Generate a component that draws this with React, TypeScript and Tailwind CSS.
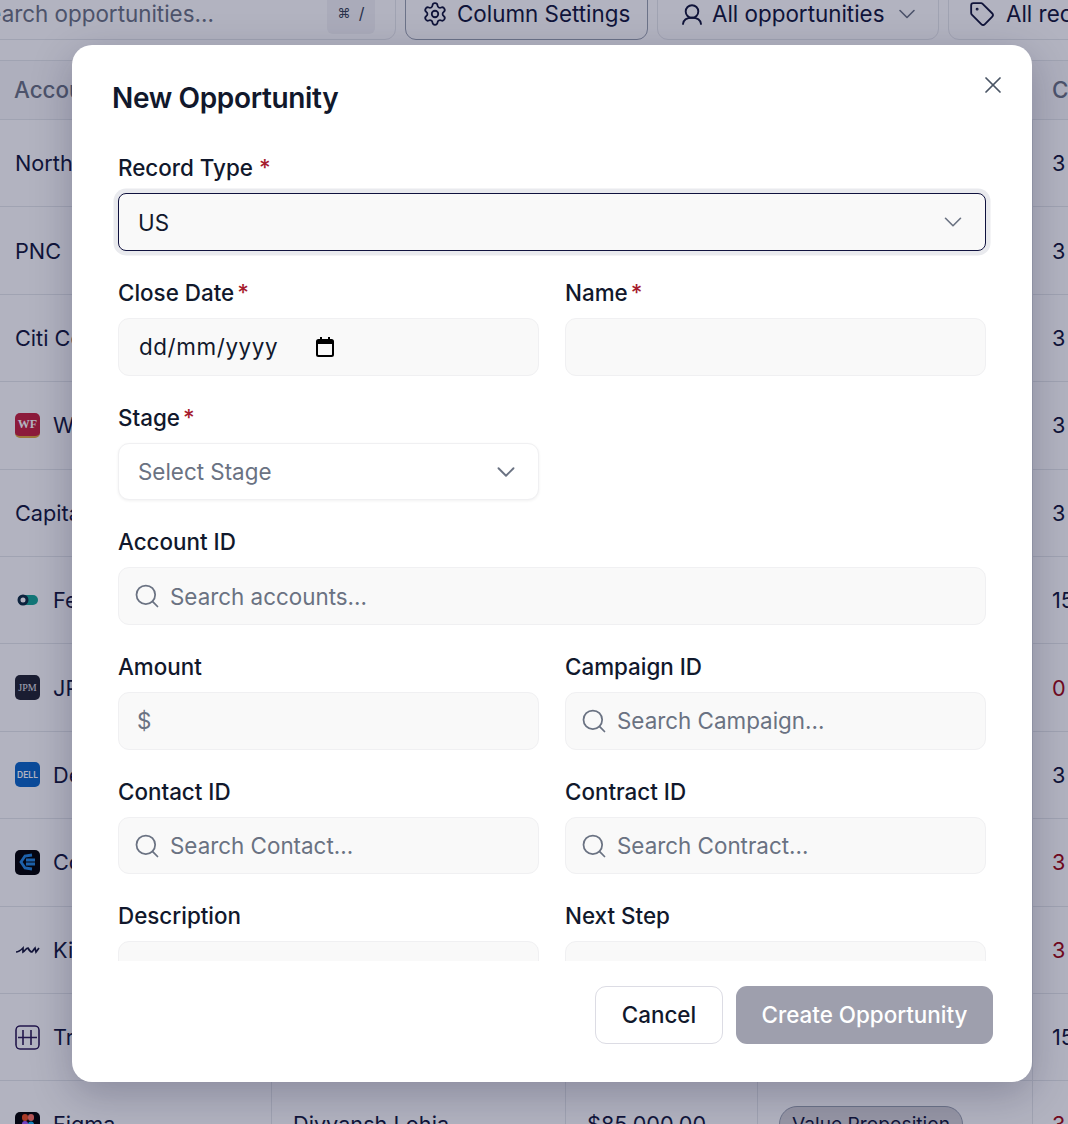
import React from 'react'
import { ChevronDown, Search, Settings, Tag, X } from 'lucide-react'

type RowData = {
  name: string
  logo?: React.ReactNode
  count: string
  late?: boolean
  owner?: string
  amount?: string
  stage?: string
}

const tile = 'w-[25px] h-[25px] rounded-[5px] flex items-center justify-center shrink-0 overflow-hidden'

const rows: RowData[] = [
  { name: 'Northern', count: '3' },
  { name: 'PNC', count: '3' },
  { name: 'Citi Corp', count: '3' },
  {
    name: 'Wells',
    count: '3',
    logo: (
      <div className={`${tile} bg-[#c8203c] border-b-[2px] border-[#e0a93a] font-[Liberation_Serif,serif] text-[12px] font-bold text-white`}>
        WF
      </div>
    ),
  },
  { name: 'Capital', count: '3' },
  {
    name: 'Fedex',
    count: '15',
    logo: (
      <div className={`${tile} bg-white/30`}>
        <svg width="22" height="12" viewBox="0 0 22 12">
          <rect x="1" y="1" width="20" height="10" rx="5" fill="#14a594" />
          <circle cx="6" cy="6" r="4" fill="#fff" stroke="#0c2a3e" strokeWidth="3" />
        </svg>
      </div>
    ),
  },
  {
    name: 'JPM',
    count: '0',
    late: true,
    logo: (
      <div className={`${tile} bg-[#20222e] font-[Liberation_Serif,serif] text-[10px] text-gray-200`}>
        JPM
      </div>
    ),
  },
  {
    name: 'Dell',
    count: '3',
    logo: (
      <div className={`${tile} bg-[#0a66c8] text-[8.5px] font-semibold text-white`}>DELL</div>
    ),
  },
  {
    name: 'Coin',
    count: '3',
    late: true,
    logo: (
      <div className={`${tile} bg-black`}>
        <svg width="20" height="20" viewBox="0 0 20 20" fill="none" stroke="#2487e0" strokeWidth="2.8">
          <path d="M14 3 L7 4 L3 10 L7 16 L14 17" />
          <path d="M8 8 H17 M8 12 H17" />
        </svg>
      </div>
    ),
  },
  {
    name: 'Kia',
    count: '3',
    late: true,
    logo: (
      <div className={tile}>
        <svg width="25" height="10" viewBox="0 0 25 10" fill="none" stroke="#15173a" strokeWidth="1.7">
          <path d="M1 7 C4 7 6 5 8 3 L8 7 C10 6 11 3 13 3 C14 5 15 7 17 7 C18 6 19 4 20 3 L21 7 L24 3" />
        </svg>
      </div>
    ),
  },
  {
    name: 'Trust',
    count: '15',
    logo: (
      <div className={tile}>
        <svg width="25" height="25" viewBox="0 0 25 25" fill="none" stroke="#2c1a55" strokeWidth="1.6">
          <rect x="1" y="1" width="23" height="23" rx="4" />
          <path d="M8 5 V20 M16 5 V20 M3 12.500 H22" />
        </svg>
      </div>
    ),
  },
  {
    name: 'Figma',
    count: '3',
    late: true,
    owner: 'Divyansh Lohia',
    amount: '$85,000.00',
    stage: 'Value Proposition',
    logo: (
      <div className={`${tile} bg-black`}>
        <svg width="14" height="22" viewBox="0 0 14 22">
          <rect x="1" y="1" width="6" height="7" rx="3" fill="#f24e1e" />
          <rect x="7" y="1" width="6" height="7" rx="3" fill="#ff7262" />
          <rect x="1" y="8" width="6" height="7" rx="3" fill="#a259ff" />
          <circle cx="10" cy="11.500" r="3" fill="#1abcfe" />
          <rect x="1" y="15" width="6" height="6" rx="3" fill="#0acf83" />
        </svg>
      </div>
    ),
  },
]

function UserIcon() {
  return (
    <svg width="20" height="21" viewBox="0 0 20 21" fill="none" stroke="currentColor" strokeWidth="1.9" strokeLinecap="round" className="shrink-0">
      <circle cx="10" cy="7.500" r="6.300" />
      <path d="M1 20 C1.500 16 5 13.800 10 13.800 C15 13.800 18.500 16 19 20" />
    </svg>
  )
}

function Backdrop() {
  return (
    <div className="w-[1068px] h-[1124px] overflow-hidden bg-white text-[22.4px] leading-[30px] text-[#11163a]">
      {/* Toolbar */}
      <div className="flex items-center gap-[9px] ml-[-58px] mt-[-12px] h-[52px]">
        <div className="w-[454px] h-full shrink-0 flex items-center justify-between pl-[31px] pr-[20px] border border-gray-200 rounded-[11px] text-gray-500 whitespace-nowrap">
          <span>Search opportunities...</span>
          <span className="w-[48px] h-[42px] mt-[-2px] rounded-[6px] bg-gray-100 flex items-center justify-center gap-[8px] text-[16px] text-gray-700">
            <span className="text-[13px]">⌘</span>/
          </span>
        </div>
        <div className="w-[243px] h-full shrink-0 flex items-center gap-[9px] pl-[16px] border border-gray-400 rounded-[11px] whitespace-nowrap">
          <Settings size={26} strokeWidth={1.65} className="shrink-0" />
          Column Settings
        </div>
        <div className="w-[282px] h-full shrink-0 flex items-center gap-[10px] pl-[24px] border border-gray-200 rounded-[11px] whitespace-nowrap">
          <UserIcon />
          All opportunities
          <ChevronDown size={28} strokeWidth={1.4} className="shrink-0 ml-[-1px] text-gray-500" />
        </div>
        <div className="w-[240px] h-full shrink-0 flex items-center gap-[11px] pl-[20px] border border-gray-200 rounded-[11px] whitespace-nowrap">
          <Tag size={26} strokeWidth={1.7} className="shrink-0" />
          All records
        </div>
      </div>

      {/* Table */}
      <div className="mt-[20px]">
        <div className="h-[60px] flex items-center border-y border-gray-200 bg-gray-50 text-gray-500 font-medium">
          <div className="w-[1033px] shrink-0 pl-[14px]">Account</div>
          <div className="shrink-0 pl-[19px]">Count</div>
        </div>
        {rows.map((row) => (
          <div key={row.name} className="h-[87.4px] flex items-center border-b border-gray-200 whitespace-nowrap text-[21.7px]">
            <div className="w-[272px] shrink-0 h-full flex items-center gap-[13px] pl-[15px] border-r border-gray-200">
              {row.logo}
              {row.name}
            </div>
            <div className="w-[294px] shrink-0 h-full flex items-center pl-[21px] border-r border-gray-200">{row.owner}</div>
            <div className="w-[192px] shrink-0 h-full flex items-center pl-[21px] border-r border-gray-200">{row.amount}</div>
            <div className="w-[275px] shrink-0 h-full flex items-center pl-[21px] border-r border-gray-200">
              {row.stage && (
                <span className="h-[36px] px-[12px] flex items-center rounded-full border border-gray-400 bg-[#d6d4d8] text-[19.2px]">
                  {row.stage}
                </span>
              )}
            </div>
            <div className={`shrink-0 pl-[19px] ${row.late ? 'text-red-800' : ''}`}>{row.count}</div>
          </div>
        ))}
      </div>
    </div>
  )
}

function Label({ text, required, tight }: { text: string; required?: boolean; tight?: boolean }) {
  return (
    <div className="h-[30px] mb-[10px] flex items-center text-[22.4px] leading-[30px] font-medium text-[#11182c] whitespace-nowrap">
      {text}
      {required && <span className={`text-[#a61c2e] ${tight ? 'ml-[3px]' : 'ml-[6px]'}`}>*</span>}
    </div>
  )
}

const fieldBox = 'h-[57.67px] flex items-center rounded-[11px] border border-[#f0f0f2] bg-[#f9f9f9] text-[22.4px] leading-[30px]'

function SearchField({ placeholder }: { placeholder: string }) {
  return (
    <div className={`${fieldBox} pl-[14px] gap-[9px] text-gray-500`}>
      <Search size={28} strokeWidth={1.5} className="shrink-0" />
      <input
        readOnly
        placeholder={placeholder}
        className="flex-1 min-w-0 h-[30px] mt-[1px] bg-transparent outline-none placeholder:text-gray-500"
      />
    </div>
  )
}

function CalendarIcon() {
  return (
    <svg width="20" height="20" viewBox="0 0 20 20" className="text-black mt-[1px]">
      <path
        fill="currentColor"
        d="M5 0h2v2h6V0h2v2h1.500A2.500 2.500 0 0 1 19 4.500v13a2.500 2.500 0 0 1-2.500 2.500h-13A2.500 2.500 0 0 1 1 17.500v-13A2.500 2.500 0 0 1 3.500 2H5V0zM3 7v10.500c0 .3.2.5.5.5h13c.3 0 .5-.2.5-.5V7H3z"
      />
    </svg>
  )
}

function NewOpportunityModal() {
  return (
    <div className="relative w-[960px] h-[1037px] flex flex-col rounded-[20px] bg-white shadow-[0_12px_40px_rgba(15,17,50,0.25)]">
      <button className="absolute top-[26px] right-[25px] text-gray-600">
        <X size={28} strokeWidth={1.5} />
      </button>

      <div className="h-[96px] shrink-0 pl-[40px] pt-[36px]">
        <h2 className="text-[28px] leading-[34px] font-semibold tracking-[-0.35px] text-[#11182c]">New Opportunity</h2>
      </div>

      <div className="flex-1 min-h-0 overflow-hidden px-[46px] pt-[12.4px]">
        <div className="grid grid-cols-2 gap-x-[26px] gap-y-[27px]">
          <div className="col-span-2">
            <Label text="Record Type" required />
            <div className="h-[57.67px] flex items-center justify-between pl-[19px] pr-[17px] rounded-[8px] border-[1.5px] border-[#10123f] bg-[#f9f9f9] ring-[4.5px] ring-[#e9eaee] text-[22.4px] leading-[30px] text-[#11182c]">
              <span className="mt-[1px]">US</span>
              <ChevronDown size={30} strokeWidth={1.3} className="text-gray-500" />
            </div>
          </div>

          <div>
            <Label text="Close Date" required tight />
            <div className={`${fieldBox} pl-[20px] gap-[37px] text-[#11182c]`}>
              <span className="mt-[1px] tracking-[0.6px]">dd/mm/yyyy</span>
              <CalendarIcon />
            </div>
          </div>
          <div>
            <Label text="Name" required tight />
            <div className={fieldBox} />
          </div>

          <div>
            <Label text="Stage" required tight />
            <div className="h-[57.67px] flex items-center justify-between pl-[19px] pr-[17px] rounded-[11px] border border-[#f0f0f2] bg-white shadow-[0_1px_3px_rgba(0,0,0,0.06)] text-[22.4px] leading-[30px] text-gray-500">
              <span className="mt-[1px]">Select Stage</span>
              <ChevronDown size={30} strokeWidth={1.5} />
            </div>
          </div>
          <div />

          <div className="col-span-2">
            <Label text="Account ID" />
            <SearchField placeholder="Search accounts..." />
          </div>

          <div>
            <Label text="Amount" />
            <div className={`${fieldBox} pl-[18px] text-gray-500`}>
              <span className="mt-[1px]">$</span>
            </div>
          </div>
          <div>
            <Label text="Campaign ID" />
            <SearchField placeholder="Search Campaign..." />
          </div>

          <div>
            <Label text="Contact ID" />
            <SearchField placeholder="Search Contact..." />
          </div>
          <div>
            <Label text="Contract ID" />
            <SearchField placeholder="Search Contract..." />
          </div>

          <div>
            <Label text="Description" />
            <div className={`${fieldBox} h-[120px]`} />
          </div>
          <div>
            <Label text="Next Step" />
            <div className={`${fieldBox} h-[120px]`} />
          </div>
        </div>
      </div>

      <div className="h-[121px] shrink-0 flex justify-end gap-[13px] pt-[25px] pr-[39px]">
        <button className="w-[128px] h-[57.6px] rounded-[11px] border border-[#dcdce4] bg-white text-[22.4px] leading-[30px] font-medium text-[#11182c]">
          Cancel
        </button>
        <button className="w-[257px] h-[57.6px] rounded-[11px] bg-[#9e9fad] text-[22.4px] leading-[30px] font-medium text-white">
          Create Opportunity
        </button>
      </div>
    </div>
  )
}

export default function App() {
  return (
    <div className="relative w-[1068px] h-[1124px] overflow-hidden font-[Inter,sans-serif] antialiased">
      <Backdrop />
      <div className="absolute inset-0 bg-[#10123a]/[0.32] pl-[72px] pt-[45px]">
        <NewOpportunityModal />
      </div>
    </div>
  )
}
